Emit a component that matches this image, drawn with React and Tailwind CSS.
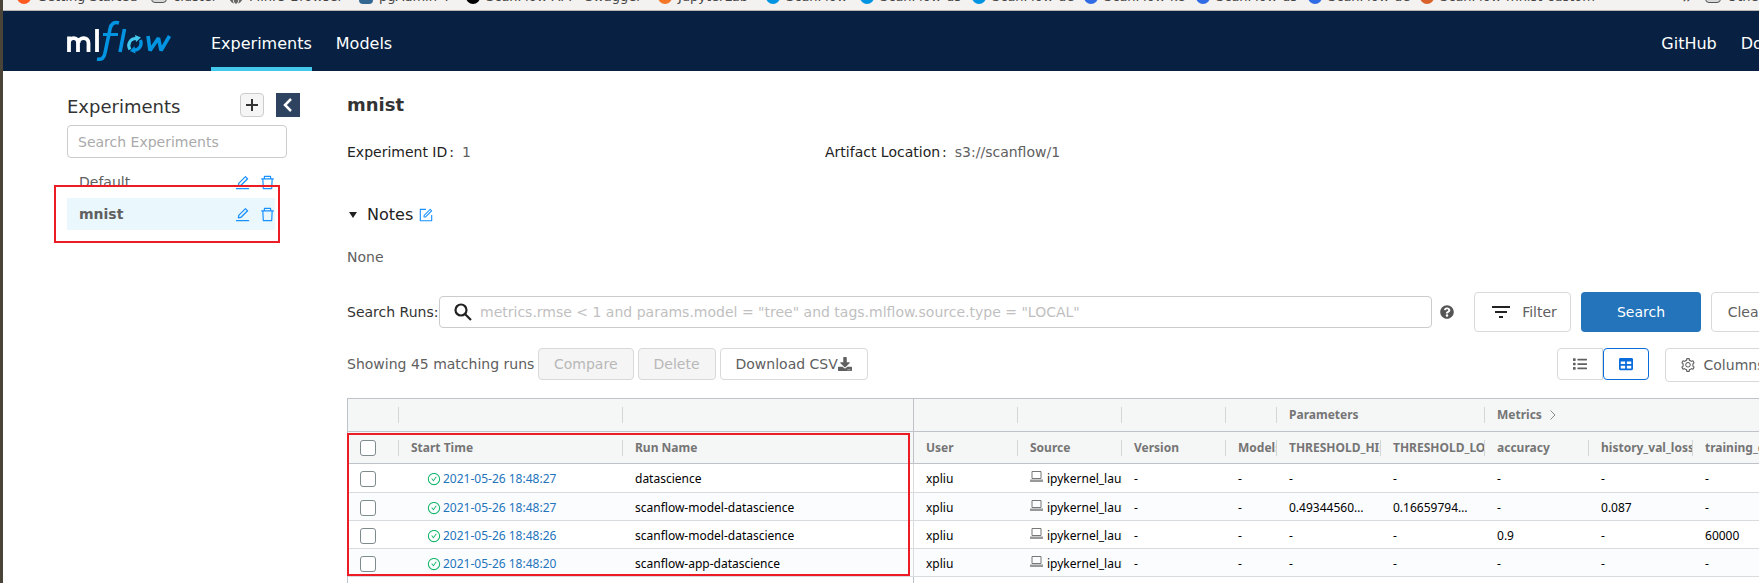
import React from "react";
import { AiOutlineEdit, AiOutlineDelete, AiOutlineForm, AiOutlineCheckCircle, AiOutlineSetting } from "react-icons/ai";
import { FaDownload, FaQuestionCircle, FaList, FaTable, FaGlobe } from "react-icons/fa";

const bookmarks = [
  { label: "Getting Started", width: "w-[134px]", color: "bg-[#ff5a1f]", shape: "round" },
  { label: "cluster", width: "w-[78px]", shape: "folder" },
  { label: "MinIO Browser", width: "w-[130px]", shape: "globe" },
  { label: "pgAdmin 4", width: "w-[107px]", color: "bg-[#336791]", shape: "square" },
  { label: "ScanFlow API - Swagger", width: "w-[192px]", color: "bg-black", shape: "round" },
  { label: "JupyterLab", width: "w-[108px]", color: "bg-[#f37726]", shape: "round" },
  { label: "ScanFlow", width: "w-[94px]", color: "bg-[#0194e2]", shape: "round" },
  { label: "ScanFlow-ds", width: "w-[112px]", color: "bg-[#0194e2]", shape: "round" },
  { label: "ScanFlow-de", width: "w-[112px]", color: "bg-[#0194e2]", shape: "round" },
  { label: "ScanFlow-k8", width: "w-[112px]", color: "bg-[#326ce5]", shape: "round" },
  { label: "ScanFlow-ds", width: "w-[112px]", color: "bg-[#326ce5]", shape: "round" },
  { label: "ScanFlow-de", width: "w-[112px]", color: "bg-[#326ce5]", shape: "round" },
  { label: "ScanFlow-mnist-custom", width: "w-[240px]", color: "bg-[#d9622b]", shape: "round" },
];

function BookmarkIcon({ shape, color }) {
  if (shape === "folder") return <span className="h-3 w-4 shrink-0 rounded-sm border border-[#555] bg-[#d8d8d8]" />;
  if (shape === "globe") return <FaGlobe className="size-3.5 shrink-0 text-[#666]" />;
  return <span className={`${color} size-3.5 shrink-0 ${shape === "round" ? "rounded-full" : "rounded-sm"}`} />;
}

function Bookmarks() {
  return (
    <div className="h-[11px] overflow-hidden border-b border-[#b9b7b5] bg-[#f4f2f0]">
      <div className="-mt-[13px] flex h-5 items-center pl-3.5 text-[13px] leading-5 text-[#444]">
        {bookmarks.map((b, i) => (
          <span key={i} className={`${b.width} flex shrink-0 items-center gap-1.5 whitespace-nowrap`}>
            <BookmarkIcon shape={b.shape} color={b.color} />
            {b.label}
          </span>
        ))}
        <span className="ml-auto mr-3 text-[18px]">»</span>
        <span className="flex w-[54px] shrink-0 items-center gap-1.5 whitespace-nowrap">
          <BookmarkIcon shape="folder" />
          Other Bookmarks
        </span>
      </div>
    </div>
  );
}

function Logo() {
  return (
    <svg viewBox="0 0 106 42" className="h-[42px] w-[106px]" role="img" aria-label="mlflow" fill="none">
      <g stroke="#fff" strokeWidth="4">
        <path d="M2 32V16.500M2 23c0-6 9-7 9 0v9M11.500 23c0-6 10-7 10 0v9M30 9v23" strokeWidth="3.800" />
      </g>
      <g stroke="#0194e2" strokeWidth="3.600">
        <path d="M52 3c-5-1.500-8 1-9 6l-5 24c-1 5-3 7-8 6" />
        <path d="M36 14.500h15" strokeWidth="3" />
        <path d="M57.500 9l-4.500 23" />
        <path d="M81 16l2 14.500L91.500 18l2.500 12.500L102.500 16" strokeLinejoin="bevel" />
        <path d="M73.500 20c2 5-1 10-6.500 10" strokeWidth="3.200" />
      </g>
      <path d="M63 29.500c-3-5 0-11 6-11" stroke="#43c9ed" strokeWidth="3.200" />
      <path d="M68 15l6 2.500-5 4.500z" fill="#43c9ed" />
      <path d="M68.500 33.500l-5.500-2.500 4.500-5z" fill="#0194e2" />
    </svg>
  );
}

function Header() {
  return (
    <header className="flex h-[60px] items-center overflow-hidden bg-[#082142] pl-16 text-[16px] text-white">
      <a href="#home" className="mr-[38px] shrink-0"><Logo /></a>
      <nav className="flex h-full flex-1 gap-6">
        <a href="#experiments" className="flex items-center border-b-4 border-[#43c9ed] pt-2.5">Experiments</a>
        <a href="#models" className="flex items-center pt-1.5">Models</a>
      </nav>
      <nav className="-mr-[21px] flex gap-6 pt-1.5">
        <a href="#github">GitHub</a>
        <a href="#docs">Docs</a>
      </nav>
    </header>
  );
}

function ExperimentRow({ name, active }) {
  return (
    <li className={`flex h-8 items-center pl-3 ${active ? "bg-[#eaf8fd] font-bold" : ""}`}>
      <a href="#experiment" className="flex-1">{name}</a>
      <button aria-label={`Rename ${name}`} className="mr-2 text-[#1890ff]"><AiOutlineEdit className="size-[17px]" /></button>
      <button aria-label={`Delete ${name}`} className="-mr-px text-[#1890ff]"><AiOutlineDelete className="size-[17px]" /></button>
    </li>
  );
}

function Sidebar() {
  return (
    <aside className="w-[233px] shrink-0 pt-[22px]">
      <div className="flex h-6 items-center">
        <h2 className="flex-1 pt-1 text-[18px] leading-6 text-[#333]">Experiments</h2>
        <button aria-label="New experiment" className="mr-3 flex size-6 items-center justify-center rounded border border-[#ccc] bg-[#f5f5f5] text-[#333]">
          <svg viewBox="0 0 12 12" className="size-3" stroke="currentColor" strokeWidth="2"><path d="M6 0v12M0 6h12" /></svg>
        </button>
        <button aria-label="Collapse" className="flex size-6 items-center justify-center bg-[#2e4360] text-white">
          <svg viewBox="0 0 24 24" className="size-6" fill="none" stroke="currentColor" strokeWidth="2.5"><path d="M15 6l-6 6 6 6" /></svg>
        </button>
      </div>
      <input aria-label="Search Experiments" placeholder="Search Experiments" className="mt-2 h-[33px] w-[220px] rounded border border-[#ccc] px-2.5 placeholder:text-[#aaa]" />
      <div className="relative mt-2 w-[208px]">
        <ul>
          <ExperimentRow name="Default" />
          <ExperimentRow name="mnist" active />
        </ul>
        <div className="pointer-events-none absolute -left-[13px] top-[19px] h-[58px] w-[226px] border-2 border-[#ed1c24]" />
      </div>
    </aside>
  );
}

const outline = "flex shrink-0 items-center justify-center rounded border border-[#d9d9d9] whitespace-nowrap";

function SearchBar() {
  return (
    <form className="mt-[25px] flex items-center" onSubmit={(e) => e.preventDefault()}>
      <label htmlFor="search-runs" className="w-[92px] shrink-0 whitespace-nowrap text-[#333]">Search Runs:</label>
      <div className="flex h-8 flex-1 items-center rounded border border-[#ccc] pl-3.5">
        <svg viewBox="0 0 18 18" className="size-[18px]" fill="none" stroke="#222" strokeWidth="2.2"><circle cx="7" cy="7" r="5.5" /><path d="M11 11l6 6" /></svg>
        <input id="search-runs" className="ml-2 flex-1 outline-none placeholder:text-[#bfbfbf]" placeholder={'metrics.rmse < 1 and params.model = "tree" and tags.mlflow.source.type = "LOCAL"'} />
      </div>
      <FaQuestionCircle className="mx-2 size-3.5 shrink-0 text-[#555]" />
      <button className={`${outline} ml-3 h-10 w-[97px] gap-3 pl-1`}>
        <svg viewBox="0 0 18 12" className="h-3 w-[18px]" stroke="#222" strokeWidth="2"><path d="M0 1h18M3 6h12M7 11h4" /></svg>
        Filter
      </button>
      <button className="ml-2.5 h-10 w-[120px] shrink-0 rounded bg-[#2374bb] text-white">Search</button>
      <button className={`${outline} ml-2.5 h-10 w-[70px]`}>Clear</button>
    </form>
  );
}

function Toolbar() {
  return (
    <div className="mt-4 flex items-start">
      <span className="w-[191px] shrink-0 whitespace-nowrap leading-8">Showing 45 matching runs</span>
      <div className="flex flex-1 gap-1">
        <button disabled className={`${outline} h-8 bg-[#f5f5f5] px-[15px] text-[#b8b8b8]`}>Compare</button>
        <button disabled className={`${outline} h-8 bg-[#f5f5f5] px-[15px] text-[#b8b8b8]`}>Delete</button>
        <button className={`${outline} h-8 px-[15px]`}>Download CSV<FaDownload className="size-3.5" /></button>
      </div>
      <button aria-label="List view" className={`${outline} h-8 w-[46px] rounded-r-none`}><FaList className="size-3.5" /></button>
      <button aria-label="Table view" className="flex h-8 w-[46px] shrink-0 items-center justify-center rounded border border-[#0a6cdb] text-[#0a6cdb]"><FaTable className="size-3.5" /></button>
      <button className={`${outline} ml-4 h-[34px] w-[116px] gap-2 pr-0.5`}><AiOutlineSetting className="size-4" />Columns</button>
    </div>
  );
}

const columns = ["User", "Source", "Version", "Models", "THRESHOLD_HIGH", "THRESHOLD_LOW", "accuracy", "history_val_loss", "training_data"];
const rows = [
  ["2021-05-26 18:48:27", "datascience", "-", "-", "-", "-", "-"],
  ["2021-05-26 18:48:27", "scanflow-model-datascience", "0.49344560…", "0.16659794…", "-", "0.087", "-"],
  ["2021-05-26 18:48:26", "scanflow-model-datascience", "-", "-", "0.9", "-", "60000"],
  ["2021-05-26 18:48:20", "scanflow-app-datascience", "-", "-", "-", "-", "-"],
];
const box = "block size-4 appearance-none rounded-[3px] border border-[#7f8c8d] bg-white";

function HeadCell({ children, pinned, open, ...rest }) {
  return (
    <th {...rest} className={`p-0 text-left font-bold ${pinned ? "border-r border-[#bdc3c7]" : ""}`}>
      <div className={`flex h-4 items-center overflow-hidden whitespace-nowrap pl-3 ${pinned || open ? "" : "border-r border-[#d3d7da]"}`}>{children}</div>
    </th>
  );
}

function RunsTable() {
  return (
    <div className="relative mt-4">
      <table className="w-[1450px] table-fixed border-separate border-spacing-0 border-l border-t border-[#bdc3c7] font-['Noto_Sans',sans-serif] text-[12px] leading-4 text-black">
        <colgroup>
          <col className="w-[51px]" /><col className="w-[224px]" /><col className="w-[291px]" />
          <col className="w-[104px]" /><col className="w-[104px]" /><col className="w-[104px]" /><col className="w-[51px]" />
          <col className="w-[104px]" /><col className="w-[104px]" /><col className="w-[104px]" /><col className="w-[104px]" /><col className="w-[104px]" />
        </colgroup>
        <thead className="bg-[#f5f7f7] text-[#757575]">
          <tr className="h-[33px] [&>th]:border-b [&>th]:border-[#bdc3c7]">
            <HeadCell /><HeadCell /><HeadCell pinned /><HeadCell /><HeadCell /><HeadCell /><HeadCell />
            <HeadCell colSpan={2}>Parameters</HeadCell>
            <HeadCell colSpan={3} open>
              Metrics
              <svg viewBox="0 0 6 10" className="ml-2 h-2.5 w-1.5" fill="none" stroke="#888"><path d="M.5.5L5 5 .5 9.500" /></svg>
            </HeadCell>
          </tr>
          <tr className="h-8 [&>th]:border-b [&>th]:border-[#bdc3c7]">
            <HeadCell><input type="checkbox" aria-label="Select all runs" className={box} /></HeadCell>
            <HeadCell>Start Time</HeadCell>
            <HeadCell pinned>Run Name</HeadCell>
            {columns.map((c) => <HeadCell key={c}>{c}</HeadCell>)}
          </tr>
        </thead>
        <tbody>
          {rows.map(([time, name, ...values], i) => (
            <tr key={i} className={`${i === 0 ? "h-[29px]" : "h-7"} even:bg-[#fbfcfe] [&>td]:overflow-hidden [&>td]:whitespace-nowrap [&>td]:border-b [&>td]:border-[#d9dcde] [&>td]:pb-0 [&>td]:pl-3 [&>td]:pr-0 [&>td]:pt-0.5`}>
              <td><input type="checkbox" aria-label={`Select ${name}`} className={box} /></td>
              <td><a href="#run" className="flex items-center gap-0.5 pl-4 text-[#2374bb]"><AiOutlineCheckCircle className="size-3.5 text-[#12b76a]" />{time}</a></td>
              <td className="border-r border-r-[#bdc3c7]">{name}</td>
              <td>xpliu</td>
              <td>
                <span className="flex items-start gap-1 overflow-hidden">
                  <svg viewBox="0 0 13 11" className="h-[11px] w-[13px] shrink-0" fill="none"><path d="M2 .5h9v7H2z" stroke="#777" /><path d="M0 8.500h13V11H0z" fill="#999" /></svg>
                  <span className="min-w-0 flex-1 overflow-hidden">ipykernel_launcher.py</span>
                </span>
              </td>
              <td>-</td><td>-</td>
              {values.map((v, j) => <td key={j}>{v}</td>)}
            </tr>
          ))}
          <tr className="h-7"><td /><td /><td className="border-r border-[#bdc3c7]" /><td colSpan={9} /></tr>
        </tbody>
      </table>
      <div className="pointer-events-none absolute left-0 top-[35px] h-[143px] w-[563px] border-2 border-[#ed1c24]" />
    </div>
  );
}

export default function App() {
  return (
    <div className="h-screen overflow-hidden border-l-[3px] border-[#4a4338] bg-white font-['DejaVu_Sans',sans-serif] text-[14px] leading-5 text-[#606060]">
      <Bookmarks />
      <Header />
      <div className="flex pl-16">
        <Sidebar />
        <main className="ml-[47px] min-w-0 flex-1 pt-[22px]">
          <h1 className="text-[18px] font-bold leading-6 text-[#333]">mnist</h1>
          <div className="mt-[25px] grid grid-cols-[478px_1fr]">
            <p><span className="mr-2 text-[#222]">Experiment ID<span className="ml-0.5">:</span></span>1</p>
            <p><span className="mr-2 text-[#222]">Artifact Location<span className="ml-0.5">:</span></span>s3://scanflow/1</p>
          </div>
          <div className="mt-[41px] flex items-center text-[16px] leading-6 text-[#222]">
            <svg viewBox="0 0 8 6" className="ml-0.5 mr-2.5 h-1.5 w-2" fill="#222"><path d="M0 0h8L4 6z" /></svg>
            Notes
            <button aria-label="Edit notes" className="ml-[5px] text-[#1890ff]"><AiOutlineForm className="size-4" /></button>
          </div>
          <p className="mt-5">None</p>
          <div className="-mr-[22px]">
            <SearchBar />
            <Toolbar />
          </div>
          <RunsTable />
        </main>
      </div>
    </div>
  );
}
